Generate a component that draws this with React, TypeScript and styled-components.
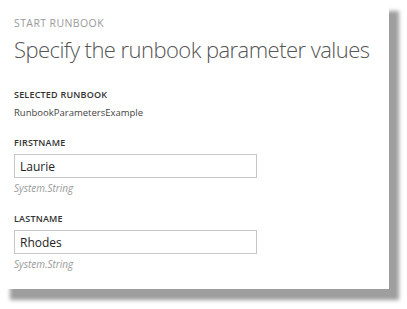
import React from "react";
import styled, { createGlobalStyle } from "styled-components";

const GlobalStyle = createGlobalStyle`
  html, body { margin: 0; padding: 0; background: #ffffff; }
  body { font-family: "Open Sans", "Noto Sans", sans-serif; }
`;

const Page = styled.div`
  width: 407px;
  height: 309px;
  box-sizing: border-box;
`;

const Panel = styled.div`
  width: 389px;
  height: 289px;
  box-sizing: border-box;
  padding: 16px 14px;
  background: #ffffff;
  box-shadow: 10px 11px 4px #9e9e9e;
  display: flex;
  flex-direction: column;
`;

const Eyebrow = styled.div`
  font-size: 10.5px;
  line-height: 14px;
  color: #9a9a9a;
  letter-spacing: 0.4px;
`;

const Title = styled.h1`
  margin: 4px 0 0;
  font-size: 22px;
  line-height: 30px;
  font-weight: 300;
  letter-spacing: -0.55px;
  color: #555555;
  white-space: nowrap;
`;

const Label = styled.div<{ $top: number }>`
  margin-top: ${(p) => p.$top}px;
  font-size: 9px;
  line-height: 12px;
  font-weight: 600;
  letter-spacing: 0.2px;
  color: #333333;
`;

const Value = styled.div`
  margin-top: 5px;
  font-size: 9.5px;
  line-height: 14px;
  color: #444444;
`;

const Input = styled.input`
  margin-top: 5px;
  width: 243px;
  height: 24px;
  box-sizing: border-box;
  border: 1.5px solid #c6c6c6;
  padding: 0 5px;
  font-family: inherit;
  font-size: 12px;
  color: #222222;
  background: #ffffff;
  outline: none;
`;

const Hint = styled.div`
  margin-top: 3px;
  font-size: 10px;
  line-height: 14px;
  font-style: italic;
  color: #9a9a9a;
`;

export default function App() {
  return (
    <>
      <GlobalStyle />
      <Page>
        <Panel>
          <Eyebrow>START RUNBOOK</Eyebrow>
          <Title>Specify the runbook parameter values</Title>
          <Label $top={25}>SELECTED RUNBOOK</Label>
          <Value>RunbookParametersExample</Value>
          <Label $top={17}>FIRSTNAME</Label>
          <Input defaultValue="Laurie" readOnly />
          <Hint>System.String</Hint>
          <Label $top={18}>LASTNAME</Label>
          <Input defaultValue="Rhodes" readOnly />
          <Hint>System.String</Hint>
        </Panel>
      </Page>
    </>
  );
}
